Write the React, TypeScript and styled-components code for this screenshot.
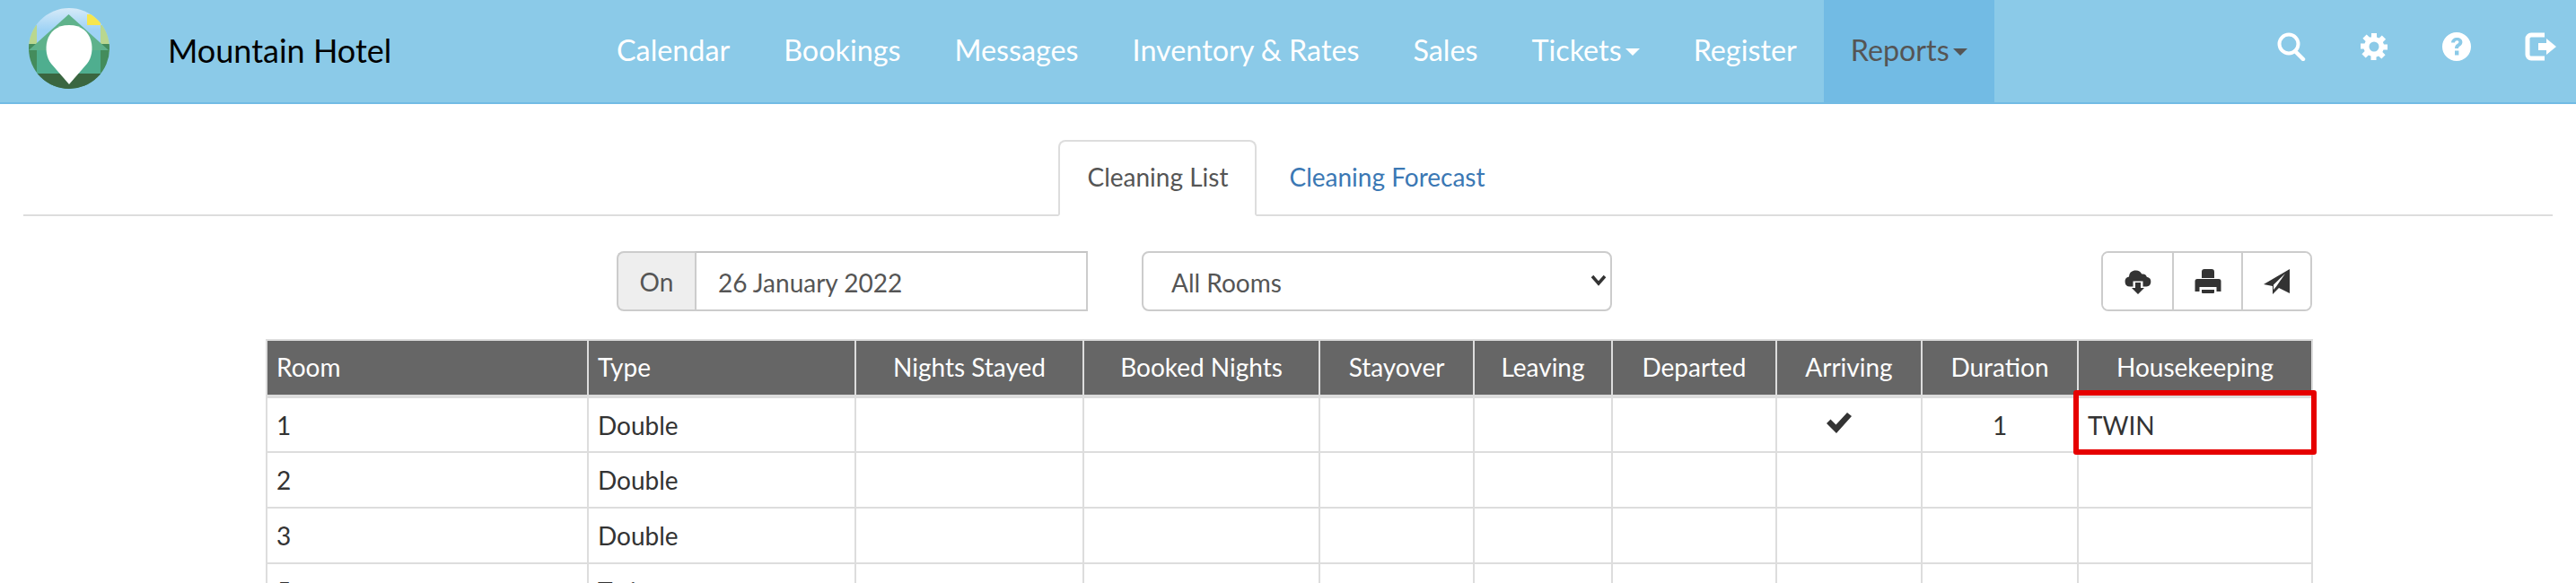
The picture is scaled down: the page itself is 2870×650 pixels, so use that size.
import React from "react";
import styled, { createGlobalStyle } from "styled-components";

const Global = createGlobalStyle`
  html, body { margin: 0; padding: 0; background: #fff; height: 650px; overflow: hidden; }
  body { font-family: Lato, "Open Sans", sans-serif; font-size: 28px; color: #333; }
  * { box-sizing: border-box; }
`;

const Navbar = styled.nav`
  display: flex; align-items: stretch; height: 116px;
  background: #8bcae8; border-bottom: 2px solid #72bbe4;
`;
const Brand = styled.div`
  display: flex; align-items: center; width: 657px; padding: 0 0 6px 32px;
`;
const BrandName = styled.span`
  margin-left: 65px; font-size: 36px; color: #000; position: relative; top: 2px;
`;
const NavLink = styled.a<{ $active?: boolean }>`
  display: flex; align-items: center; padding: 0 30px 4px;
  font-size: 32.3px; text-decoration: none;
  color: ${(p) => (p.$active ? "#555" : "#fff")};
  background: ${(p) => (p.$active ? "#72bbe4" : "transparent")};
`;
const Caret = styled.span`
  width: 0; height: 0; margin: 6px 0 0 4px;
  border-top: 8px solid currentColor;
  border-left: 8px solid transparent; border-right: 8px solid transparent;
`;
const NavIcons = styled.div`
  display: flex; align-items: center; gap: 60px; margin-left: auto; padding: 0 21px 10px 0; color: #fff;
`;

const Content = styled.main`
  padding: 40px 26px 0;
`;
const Tabs = styled.div`
  display: flex; justify-content: center; height: 85px;
  border-bottom: 2px solid #ddd;
`;
const Tab = styled.a<{ $active?: boolean }>`
  display: flex; align-items: center; height: 85px; padding: 0 30px 4px;
  font-size: 28px; text-decoration: none; margin-right: 4px;
  border-radius: 8px 8px 0 0;
  color: ${(p) => (p.$active ? "#555" : "#3b78b4")};
  border: 2px solid ${(p) => (p.$active ? "#ddd" : "transparent")};
  border-bottom-color: ${(p) => (p.$active ? "#fff" : "transparent")};
  background: ${(p) => (p.$active ? "#fff" : "transparent")};
`;
const Controls = styled.div`
  display: flex; align-items: stretch; height: 67px; width: 2279px; margin: 39px 0 31px 271px;
`;
const InputGroup = styled.div`
  display: flex; width: 525px; margin-left: 390px; font-size: 28px;
`;
const Addon = styled.span`
  display: flex; align-items: center; justify-content: center; width: 87px; color: #555;
  background: #eee; border: 2px solid #ccc; border-right: 0; border-radius: 8px 0 0 8px;
`;
const DateInput = styled.input`
  flex: 1; min-width: 0; padding: 2px 24px 0; font: inherit; color: #555;
  border: 2px solid #ccc; border-top-color: #c4c4c4; outline: none;
`;
const SelectWrap = styled.div`
  position: relative; width: 524px; margin-left: 60px; color: #333;
  & > svg { position: absolute; right: 6px; top: 25px; pointer-events: none; }
`;
const RoomSelect = styled.select`
  appearance: none; width: 100%; height: 100%; padding: 2px 31px 0; font: inherit; font-size: 28px; color: #555;
  background: #fff; border: 2px solid #ccc; border-radius: 8px; outline: none;
`;
const BtnGroup = styled.div`
  display: flex; margin-left: auto; border: 2px solid #ccc; border-radius: 8px; overflow: hidden;
`;
const IconBtn = styled.button`
  display: flex; align-items: center; justify-content: center; width: 77px; padding: 0;
  background: #fff; color: #333; border: 0;
  & + & { border-left: 2px solid #ccc; }
`;
const Grid = styled.table`
  width: 2279px; margin: 0 0 0 270px; border-collapse: collapse; table-layout: fixed;
`;
const Head = styled.th<{ $left?: boolean }>`
  height: 63px; padding: 0 10px 2px; font-weight: 400; font-size: 28px; color: #fff; background: #666;
  text-align: ${(p) => (p.$left ? "left" : "center")};
  border: 2px solid #ddd; border-bottom-width: 4px; border-top-width: 2px;
`;
const Cell = styled.td<{ $center?: boolean }>`
  position: relative; height: 62px; padding: 0 10px; font-size: 28px; color: #333;
  text-align: ${(p) => (p.$center ? "center" : "left")};
  border: 2px solid #ddd;
`;
const Highlight = styled.span`
  position: absolute; left: -6px; right: -6px; top: -9px; bottom: -4px;
  border: 6px solid #e60000; border-radius: 3px; pointer-events: none;
`;
const CheckMark = styled.svg`
  display: block; margin: 0 auto; position: relative; left: -11px; top: -2px;
`;

const Logo = () => (
  <svg width="90" height="90" viewBox="0 0 90 90" aria-hidden="true">
    <defs>
      <clipPath id="logoClip"><circle cx="45" cy="45" r="45" /></clipPath>
      <linearGradient id="sky" x1="0" y1="0" x2="0" y2="1">
        <stop offset="0" stopColor="#d6eaf8" />
        <stop offset="0.5" stopColor="#9dd2f5" />
      </linearGradient>
    </defs>
    <g clipPath="url(#logoClip)">
      <rect width="90" height="50" fill="url(#sky)" />
      <polygon points="65,7 80,7 80,19 75,19 65,19" fill="#f6e64e" />
      <rect x="0" y="19" width="9" height="30" fill="#b9d78f" />
      <rect x="80" y="19" width="10" height="30" fill="#b9d78f" />
      <rect x="0" y="40" width="90" height="50" fill="#448c5c" />
      <polygon points="44.5,7 89,47 0,47" fill="#5fb28b" />
      <rect x="9" y="47" width="71" height="27" fill="#4fae8f" />
      <rect x="0" y="73" width="90" height="17" fill="#3a6640" />
      <path d="M45 85 L25 62 C15 50 17 19 45 19 C73 19 75 50 65 62 Z" fill="#fff" />
    </g>
  </svg>
);

const SearchIcon = () => (
  <svg width="32" height="32" viewBox="0 0 32 32" aria-hidden="true">
    <circle cx="13" cy="13" r="10.5" fill="none" stroke="currentColor" strokeWidth="4" />
    <path d="M20 21 L29 30" stroke="currentColor" strokeWidth="4.5" strokeLinecap="round" />
  </svg>
);
const GearIcon = () => (
  <svg width="32" height="32" viewBox="0 0 32 32" aria-hidden="true">
    <path
      fillRule="evenodd"
      fill="currentColor"
      d="M13 1h6v4.500l2.600 1.100 3.200-3.200 4.300 4.300-3.200 3.200 1.100 2.600H31v6h-4.500l-1.100 2.600 3.200 3.200-4.300 4.300-3.200-3.200-2.600 1.100V31h-6v-4.500l-2.600-1.100-3.200 3.200-4.300-4.300 3.200-3.200-1.100-2.600H1v-6h4.500l1.100-2.600-3.200-3.200 4.300-4.300 3.200 3.200L13 5.500z M16 10.500a5.500 5.500 0 1 0 0 11a5.500 5.500 0 1 0 0-11z"
    />
  </svg>
);
const HelpIcon = () => (
  <svg width="32" height="32" viewBox="0 0 32 32" aria-hidden="true">
    <path
      fillRule="evenodd"
      fill="currentColor"
      d="M16 0a16 16 0 1 0 0 32a16 16 0 1 0 0-32z M10 11.500c.3-3.600 3-5.500 6.400-5.500c3.500 0 6 2 6 5c0 2.400-1.400 3.500-2.800 4.500c-1 .7-1.600 1.200-1.600 2.500h-4c0-2.800 1.200-4 2.700-5c1-.7 1.700-1.200 1.700-2.200c0-1-.8-1.500-2-1.500c-1.300 0-2.200.8-2.400 2.200z M14 20.500h4.400v5h-4.400z"
    />
  </svg>
);
const LogoutIcon = () => (
  <svg width="36" height="32" viewBox="0 0 36 32" aria-hidden="true">
    <path d="M22 3H7a4 4 0 0 0-4 4v18a4 4 0 0 0 4 4h15" fill="none" stroke="currentColor" strokeWidth="5" />
    <path d="M15 12h9V7l11 9l-11 9v-5h-9z" fill="currentColor" />
  </svg>
);
const CloudIcon = () => (
  <svg width="30" height="30" viewBox="0 0 30 30" aria-hidden="true">
    <path
      fill="currentColor"
      d="M6 20.500a5.500 5.500 0 0 1-1-10.900a7.500 7.500 0 0 1 14.200-3a5 5 0 0 1 5.600 3.200a5.400 5.400 0 0 1-.3 10.700h-4v-6h-11v6z"
    />
    <path fill="currentColor" d="M12 16h6v6h4l-7 7l-7-7h4z" />
  </svg>
);
const PrintIcon = () => (
  <svg width="30" height="30" viewBox="0 0 30 30" aria-hidden="true">
    <path
      fillRule="evenodd"
      fill="currentColor"
      d="M8 4a3 3 0 0 1 3-3h8a3 3 0 0 1 3 3v7H8z M3 12h24a2.500 2.500 0 0 1 2.500 2.500V26h-5v-5h-19v5H.5V14.500A2.500 2.500 0 0 1 3 12z M8 24h14v3a1 1 0 0 1-1 1H9a1 1 0 0 1-1-1z"
    />
  </svg>
);
const SendIcon = () => (
  <svg width="30" height="30" viewBox="0 0 30 30" aria-hidden="true">
    <path fill="currentColor" fillRule="evenodd" d="M29 1V28L17 22L10 29V20L0 18Z M24 6L11 18.500V24L14 20.500Z" />
  </svg>
);
const CheckIcon = () => (
  <CheckMark width="30" height="25" viewBox="0 0 30 25" aria-hidden="true">
    <path fill="currentColor" d="M1 13l4.500-4.500l6 6L24 1l5 4L12 24z" />
  </CheckMark>
);

const columns = [358, 298, 254, 263, 172, 154, 183, 162, 174, 261];
const heads = ["Room", "Type", "Nights Stayed", "Booked Nights", "Stayover", "Leaving", "Departed", "Arriving", "Duration", "Housekeeping"];
const rows = [
  { room: "1", type: "Double", arriving: true, duration: "1", housekeeping: "TWIN" },
  { room: "2", type: "Double" },
  { room: "3", type: "Double" },
  { room: "5", type: "Twin" },
];

export default function App() {
  return (
    <>
      <Global />
      <Navbar>
        <Brand>
          <Logo />
          <BrandName>Mountain Hotel</BrandName>
        </Brand>
        <NavLink>Calendar</NavLink>
        <NavLink>Bookings</NavLink>
        <NavLink>Messages</NavLink>
        <NavLink>Inventory &amp; Rates</NavLink>
        <NavLink>Sales</NavLink>
        <NavLink>Tickets<Caret /></NavLink>
        <NavLink>Register</NavLink>
        <NavLink $active>Reports<Caret /></NavLink>
        <NavIcons>
          <SearchIcon />
          <GearIcon />
          <HelpIcon />
          <LogoutIcon />
        </NavIcons>
      </Navbar>
      <Content>
        <Tabs>
          <Tab $active>Cleaning List</Tab>
          <Tab>Cleaning Forecast</Tab>
        </Tabs>
        <Controls>
          <InputGroup>
            <Addon>On</Addon>
            <DateInput defaultValue="26 January 2022" readOnly />
          </InputGroup>
          <SelectWrap>
            <RoomSelect defaultValue="all">
              <option value="all">All Rooms</option>
            </RoomSelect>
            <svg width="18" height="14" viewBox="0 0 18 14" aria-hidden="true">
              <path d="M2 3l7 8l7-8" fill="none" stroke="currentColor" strokeWidth="3.500" />
            </svg>
          </SelectWrap>
          <BtnGroup>
            <IconBtn><CloudIcon /></IconBtn>
            <IconBtn><PrintIcon /></IconBtn>
            <IconBtn><SendIcon /></IconBtn>
          </BtnGroup>
        </Controls>
        <Grid>
          <colgroup>
            {columns.map((w, i) => (
              <col key={i} width={w} />
            ))}
          </colgroup>
          <thead>
            <tr>
              {heads.map((h, i) => (
                <Head key={h} $left={i < 2}>{h}</Head>
              ))}
            </tr>
          </thead>
          <tbody>
            {rows.map((r) => (
              <tr key={r.room}>
                <Cell>{r.room}</Cell>
                <Cell>{r.type}</Cell>
                <Cell /><Cell /><Cell /><Cell /><Cell />
                <Cell $center>{r.arriving && <CheckIcon />}</Cell>
                <Cell $center>{r.duration}</Cell>
                <Cell>
                  {r.housekeeping}
                  {r.housekeeping && <Highlight />}
                </Cell>
              </tr>
            ))}
          </tbody>
        </Grid>
      </Content>
    </>
  );
}
